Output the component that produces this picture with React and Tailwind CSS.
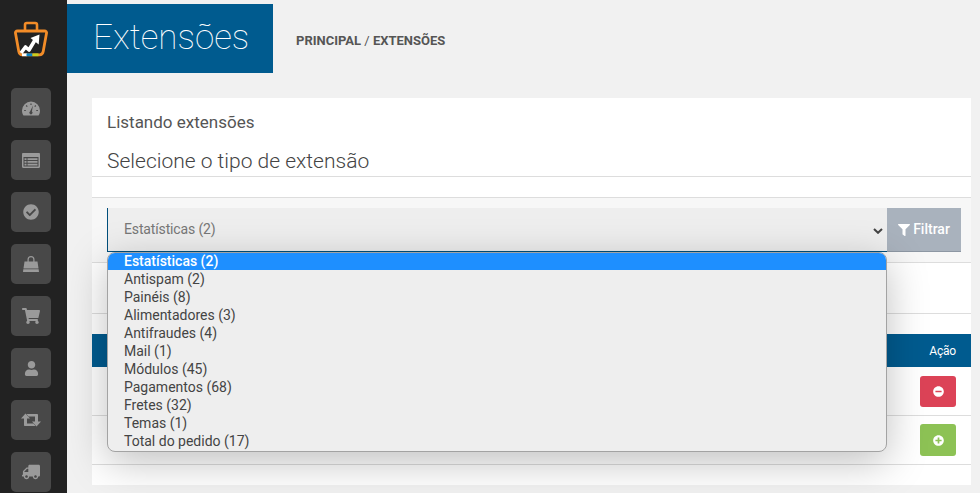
import React from "react";
import { FaCheckCircle, FaShoppingCart, FaUser, FaTruck, FaFilter, FaMinusCircle, FaPlusCircle } from "react-icons/fa";

const font = { fontFamily: "Roboto, sans-serif" };

function Bag({ className }) {
  return (
    <svg viewBox="0 0 20 20" className={className} fill="currentColor">
      <path d="M6.500 8V5.500a3.500 3.500 0 0 1 7 0V8h-1.200V5.500a2.300 2.300 0 0 0-4.600 0V8z" />
      <path d="M3.500 7.500h13l1 7h-15z" />
      <path d="M2.300 15.300h15.400l.3 2.700H2z" />
    </svg>
  );
}

function Retweet({ className }) {
  return (
    <svg viewBox="0 0 20 14" className={className} fill="currentColor">
      <path d="M0 5.500L4.500.5 9 5.500H6v5h6.500l2 2.500H4c-.6 0-1-.4-1-1V5.500z" />
      <path d="M20 8.500l-4.500 5-4.500-5h3v-5H7.500L5.500 1H16c.6 0 1 .4 1 1v6.500z" />
    </svg>
  );
}

function ListAlt({ className }) {
  return (
    <svg viewBox="0 0 18 15" className={className}>
      <path d="M1.200 0h15.600c.7 0 1.200.5 1.200 1.200v12.600c0 .7-.5 1.200-1.200 1.200H1.200C.5 15 0 14.500 0 13.800V1.200C0 .5.500 0 1.200 0z" fill="currentColor" />
      <path d="M1.500 4h15v9.500h-15z" fill="#484848" />
      <path d="M2.500 5.200h2v1.800h-2zM2.500 8h2v1.800h-2zM2.500 10.800h2v1.800h-2zM5.500 5.200h10v1.800h-10zM5.500 8h10v1.800h-10zM5.500 10.800h10v1.800h-10z" fill="currentColor" />
    </svg>
  );
}

function Gauge({ className }) {
  return (
    <svg viewBox="0 0 18 15" className={className}>
      <path d="M9 0.500a9 9 0 0 1 9 9c0 1.900-.5 3.700-1.500 5H1.500C.5 13.200 0 11.400 0 9.500a9 9 0 0 1 9-9z" fill="currentColor" />
      <path d="M9 2.500v1.600M4.200 4.500l1.100 1.100M2.200 9.500h1.600M14.300 9.500h1.600M12.700 5.600l1.100-1.100" stroke="#484848" strokeWidth="1.200" fill="none" />
      <path d="M11 4.500L9.900 10.500a1.600 1.600 0 1 1-1.900 0z" fill="#484848" />
    </svg>
  );
}

function Logo() {
  return (
    <svg viewBox="0 0 34 36" className="w-[34px] h-[36px] ml-[3px]">
      <path d="M11 9.500V3.800c0-1 .8-1.800 1.800-1.800h8.400c1 0 1.800.8 1.800 1.800v5.700" fill="none" stroke="#f28c28" strokeWidth="2.600" />
      <path d="M3.500 10h27c1.500 0 2.300.9 2 2.300l-3.300 18.200c-.4 2-1.600 3.300-3.600 3.300H8.400c-2 0-3.200-1.300-3.600-3.300L1.500 12.300c-.3-1.400.5-2.300 2-2.300z" fill="none" stroke="#f28c28" strokeWidth="2.800" />
      <path d="M8 33.800h5" stroke="#ffffff" strokeWidth="2.800" />
      <path d="M12.500 33.800h6" stroke="#0a84c6" strokeWidth="2.800" />
      <path d="M18.500 33.800h6" stroke="#c8cf1f" strokeWidth="2.800" />
      <path d="M7 32l4.500-6 3.500 3 6-10" fill="none" stroke="#ffffff" strokeWidth="3.600" strokeLinejoin="round" />
      <path d="M16.500 17l9-3.500-.8 10z" fill="#ffffff" />
    </svg>
  );
}

const navIcons = [
  <Gauge className="w-[18px] h-[15px]" />,
  <ListAlt className="w-[18px] h-[15px]" />,
  <FaCheckCircle className="w-[16px] h-[16px]" />,
  <Bag className="w-[20px] h-[20px]" />,
  <FaShoppingCart className="w-[18px] h-[18px]" />,
  <FaUser className="w-[15px] h-[15px]" />,
  <Retweet className="w-[20px] h-[14px]" />,
  <FaTruck className="w-[18px] h-[18px] -scale-x-100" />,
];

const options = [
  "Estatísticas (2)", "Antispam (2)", "Painéis (8)", "Alimentadores (3)", "Antifraudes (4)", "Mail (1)",
  "Módulos (45)", "Pagamentos (68)", "Fretes (32)", "Temas (1)", "Total do pedido (17)",
];

export default function App() {
  return (
    <div style={font} className="flex h-[493px] w-[980px] overflow-hidden bg-[#f1f1f1]">
      <aside className="w-[67px] shrink-0 bg-[#222222] flex flex-col items-start px-[11px] pt-[21px]">
        <Logo />
        <div className="mt-[31px] flex flex-col gap-[12px]">
          {navIcons.map((icon, i) => (
            <div key={i} className="w-10 h-10 shrink-0 rounded-[5px] bg-[#484848] text-[#9a9a9a] flex items-center justify-center">
              {icon}
            </div>
          ))}
        </div>
      </aside>

      <main className="flex-1 min-w-0 pt-1">
        <header className="flex items-center h-[69px]">
          <div className="w-[206px] h-full bg-[#005b8f] flex items-center pl-[26px] pb-[2px]">
            <h1 className="text-[35px] font-thin text-white leading-none">Extensões</h1>
          </div>
          <div className="ml-[23px] mt-[5px] text-[13px] font-bold text-[#555555] uppercase">
            Principal <span className="font-normal">/</span> Extensões
          </div>
        </header>

        <section className="mt-[25px] ml-[25px] w-[879px] h-[387px] bg-white">
          <div className="h-[79px] border-b border-[#dddddd] px-[15px] pt-[15px]">
            <p className="text-[17px] leading-[19px] text-[#555555]">Listando extensões</p>
            <p className="mt-[17px] text-[21px] leading-[24px] font-light text-[#444444]">Selecione o tipo de extensão</p>
          </div>

          <div className="h-[21px] border-b border-[#dddddd]"></div>

          <div className="relative h-[65px] border-b border-[#dddddd] bg-[#f7f7f7] pl-[15px] pr-[10px] pt-[10px]">
            <div className="flex h-[44px]">
              <div className="flex-1 bg-[#eeeeee] border-l border-b border-[#004f7c] flex items-center justify-between pl-[16px] pr-[4px] text-[14px] tracking-[-0.14px] text-[#777777]">
                <span>Estatísticas (2)</span>
                <svg viewBox="0 0 10 6" className="w-[10px] h-[6px] mt-[2px]" fill="none" stroke="#444444" strokeWidth="2">
                  <path d="M1 1l4 3.800L9 1" />
                </svg>
              </div>
              <div className="w-[74px] bg-[#a9b2bd] border-b border-[#8d97a3] text-white text-[14px] font-medium flex items-center justify-center gap-[3px]">
                <FaFilter className="w-[12px] h-[12px]" />
                <span>Filtrar</span>
              </div>
            </div>

            <ul className="absolute z-10 left-[15px] top-[54px] w-[780px] h-[200px] rounded-[8px] bg-[#eeeeee] border border-[#a3a3a3] shadow-[0_10px_40px_rgba(0,0,0,0.25)] overflow-hidden text-[14px] leading-[18px] text-[#444444]">
              {options.map((o, i) => (
                <li key={o} className={i === 0 ? "h-[18px] pl-[16px] bg-[#1e8fff] text-white font-medium -mt-px" : "h-[18px] pl-[16px]"}>{o}</li>
              ))}
            </ul>
          </div>

          <div className="h-[51px] border-b border-[#dddddd]"></div>
          <div className="h-[20px]"></div>

          <div className="h-[33px] bg-[#005b8f] text-white text-[12px] tracking-[-0.2px] flex items-center justify-end pr-[15px]">Ação</div>

          <div className="h-[49px] border-b border-[#dddddd] flex items-center justify-end pr-[15px]">
            <div className="w-9 h-[31px] rounded-[3px] bg-[#dc4357] text-white flex items-center justify-center">
              <FaMinusCircle className="w-[11px] h-[11px]" />
            </div>
          </div>
          <div className="h-[49px] border-b border-[#dddddd] flex items-center justify-end pr-[15px]">
            <div className="w-9 h-[32px] rounded-[3px] bg-[#8dc255] text-white flex items-center justify-center">
              <FaPlusCircle className="w-[11px] h-[11px]" />
            </div>
          </div>
        </section>
      </main>
    </div>
  );
}
